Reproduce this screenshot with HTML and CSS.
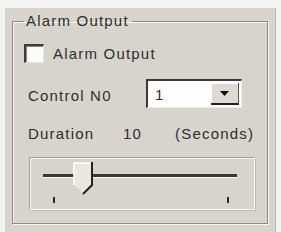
FILE: index.html
```html
<!DOCTYPE html>
<html lang="en">
<head>
    <meta charset="UTF-8">
    <title>Alarm Output</title>
    <link rel="stylesheet" href="styles.css">
</head>
<body>
    <div class="window">
        <fieldset class="group">
            <legend>Alarm Output</legend>

            <label class="check-row">
                <span class="check-box"></span>
                <span>Alarm Output</span>
            </label>

            <div class="control-row">
                <span class="control-label">Control N0</span>
                <div class="combo">
                    <span class="combo-value">1</span>
                    <span class="combo-btn">
                        <svg width="9" height="5" viewBox="0 0 9 5"><polygon points="0,0 9,0 4.5,5" fill="#111"/></svg>
                    </span>
                </div>
            </div>

            <div class="duration-row">
                <span class="duration-label">Duration</span>
                <span class="duration-value">10</span>
                <span class="duration-unit">(Seconds)</span>
            </div>

            <div class="slider">
                <div class="track"></div>
                <svg class="thumb" width="21" height="33" viewBox="0 0 21 33">
                    <polygon points="1,1 19,1 19,23 10,31 1,23" fill="#e9e7e2"/>
                    <polyline points="1,23 1,1 19,1" fill="none" stroke="#fff" stroke-width="1.5"/>
                    <polyline points="19,0 19,23 10,32" fill="none" stroke="#222" stroke-width="2"/>
                </svg>
                <div class="ticks">
                    <span class="tick"></span>
                    <span class="tick"></span>
                </div>
            </div>
        </fieldset>
    </div>
</body>
</html>
```

FILE: styles.css
```css
* {
    box-sizing: border-box;
}

body {
    margin: 0;
    width: 281px;
    height: 232px;
    background-color: #f3f3f1;
    font-family: 'Liberation Sans', Arial, sans-serif;
    font-size: 15px;
    letter-spacing: 1.2px;
    color: #2e2e2e;
    overflow: hidden;
}

.window {
    margin: 8px 0 0 5px;
    width: 271px;
    height: 224px;
    padding: 5px 7px 0 7px;
    background-color: #d7d4cd;
    border-right: 1px solid #b9b6b0;
}

/* etched group box */
.group {
    margin: 0;
    height: 211px;
    padding: 14px 12px 0 11px;
    border: 1px solid #8e8b85;
    box-shadow: inset 1px 1px 0 #f6f5f2, 1px 1px 0 #f6f5f2;
    min-width: 0;
}

.group legend {
    padding: 0 3px 0 2px;
    margin-left: 0;
    line-height: 16px;
}

.check-row {
    display: flex;
    align-items: center;
    gap: 9px;
    height: 20px;
}

.check-box {
    width: 20px;
    height: 19px;
    background-color: #fbfbfa;
    border-top: 2px solid #3c3c3c;
    border-left: 2px solid #3c3c3c;
    border-right: 1px solid #e6e4df;
    border-bottom: 1px solid #e6e4df;
    box-shadow: inset 1px 1px 0 #8a8884;
}

.control-row {
    display: flex;
    align-items: center;
    margin-top: 16px;
    padding-left: 4px;
}

.control-label {
    width: 118px;
    padding-top: 3px;
}

.combo {
    display: flex;
    align-items: center;
    width: 96px;
    height: 29px;
    padding: 2px;
    background-color: #fdfdfd;
    border-top: 2px solid #3a3a3a;
    border-left: 2px solid #3a3a3a;
    border-right: 1px solid #eceae6;
    border-bottom: 1px solid #eceae6;
}

.combo-value {
    flex: 1;
    padding-left: 5px;
}

.combo-btn {
    display: flex;
    align-items: center;
    justify-content: center;
    width: 28px;
    height: 100%;
    background-color: #dddad4;
    border-right: 1px solid #555;
    border-bottom: 2px solid #222;
    box-shadow: inset 1px 1px 0 #fff;
}

.duration-row {
    display: flex;
    align-items: center;
    height: 18px;
    margin-top: 16px;
    padding-left: 4px;
}

.duration-label {
    width: 95px;
}

.duration-value {
    width: 52px;
}

.slider {
    position: relative;
    margin: 15px 0 0 5px;
    width: 226px;
    height: 53px;
    border-top: 1px solid #a29f99;
    border-left: 1px solid #a29f99;
    border-right: 1px solid #f8f7f4;
    border-bottom: 1px solid #f8f7f4;
    box-shadow: inset 1px 1px 0 #f6f5f2, 1px 1px 0 #bdbab4;
    padding: 16px 17px 0 13px;
}

.track {
    height: 3px;
    background-color: #383838;
    box-shadow: 0 1px 0 #fbfbfa;
}

.thumb {
    position: absolute;
    left: 43px;
    top: 4px;
}

.ticks {
    display: flex;
    justify-content: space-between;
    margin-top: 20px;
    padding: 0 8px 0 10px;
}

.tick {
    width: 2px;
    height: 6px;
    background-color: #2a2a2a;
}
```
